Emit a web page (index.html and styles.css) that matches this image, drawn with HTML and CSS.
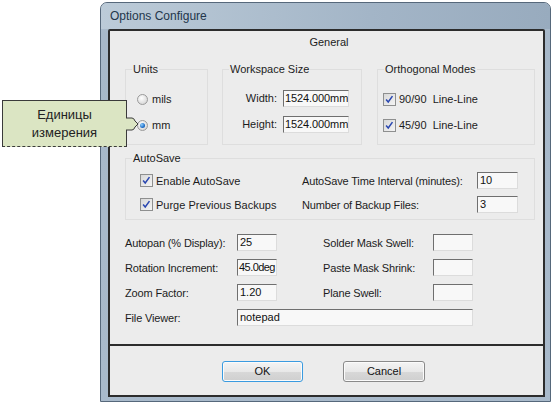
FILE: index.html
```html
<!DOCTYPE html>
<html>
<head>
<meta charset="utf-8">
<link rel="stylesheet" href="styles.css">
</head>
<body>
<div class="window">
  <div class="titlebar">Options Configure</div>
  <div class="client">
    <div class="panel">
      <div class="panel-title">General</div>
      <div class="groups">
        <div class="grp grp-units">
          <span class="legend">Units</span>
          <div class="rows">
            <div class="row"><span class="radio"></span><span>mils</span></div>
            <div class="row"><span class="radio on"><span class="dot"></span></span><span>mm</span></div>
          </div>
        </div>
        <div class="grp grp-ws">
          <span class="legend">Workspace Size</span>
          <div class="ws-grid">
            <span class="rlabel">Width:</span><span class="input">1524.000mm</span>
            <span class="rlabel">Height:</span><span class="input">1524.000mm</span>
          </div>
        </div>
        <div class="grp grp-ortho">
          <span class="legend">Orthogonal Modes</span>
          <div class="rows">
            <div class="row"><span class="cb"><svg viewBox="0 0 13 13" width="11" height="11"><path d="M2.5 6.5 L5 9.5 L10 2.5" fill="none" stroke="#2a47b0" stroke-width="1.8"/></svg></span><span>90/90&nbsp; Line-Line</span></div>
            <div class="row"><span class="cb"><svg viewBox="0 0 13 13" width="11" height="11"><path d="M2.5 6.5 L5 9.5 L10 2.5" fill="none" stroke="#2a47b0" stroke-width="1.8"/></svg></span><span>45/90&nbsp; Line-Line</span></div>
          </div>
        </div>
      </div>
      <div class="grp grp-autosave">
        <span class="legend">AutoSave</span>
        <div class="as-grid">
          <div class="row"><span class="cb"><svg viewBox="0 0 13 13" width="11" height="11"><path d="M2.5 6.5 L5 9.5 L10 2.5" fill="none" stroke="#2a47b0" stroke-width="1.8"/></svg></span><span>Enable AutoSave</span></div>
          <span class="lbl">AutoSave Time Interval (minutes):</span>
          <span class="input">10</span>
          <div class="row"><span class="cb"><svg viewBox="0 0 13 13" width="11" height="11"><path d="M2.5 6.5 L5 9.5 L10 2.5" fill="none" stroke="#2a47b0" stroke-width="1.8"/></svg></span><span>Purge Previous Backups</span></div>
          <span class="lbl">Number of Backup Files:</span>
          <span class="input">3</span>
        </div>
      </div>
      <div class="lower">
        <span class="lbl">Autopan (% Display):</span><span class="input">25</span><span></span>
        <span class="lbl">Solder Mask Swell:</span><span class="input"></span>
        <span class="lbl">Rotation Increment:</span><span class="input tight">45.0deg</span><span></span>
        <span class="lbl">Paste Mask Shrink:</span><span class="input"></span>
        <span class="lbl">Zoom Factor:</span><span class="input">1.20</span><span></span>
        <span class="lbl">Plane Swell:</span><span class="input"></span>
        <span class="lbl">File Viewer:</span><span class="input wide">notepad</span>
      </div>
    </div>
    <div class="buttons">
      <span class="btn ok">OK</span>
      <span class="btn cancel">Cancel</span>
    </div>
  </div>
</div>
<div class="callout">
  <div class="callout-text">Единицы<br>измерения</div>
  <svg class="pointer" viewBox="0 0 14 16" width="14" height="16">
    <path d="M0 1 H6 Q8 1 9 4 L12 7 L9 10 Q8 13 6 13 H0 Z" fill="#dbe5c3"/>
    <path d="M0 1 H6 Q8 1 9 4 L12 7 L9 10 Q8 13 6 13 H0" fill="none" stroke="#3a3a3a" stroke-width="1"/>
  </svg>
</div>
</body>
</html>
```

FILE: styles.css
```css
html, body {
  margin: 0;
  padding: 0;
  background: #ffffff;
}
body {
  width: 554px;
  height: 407px;
  position: relative;
  overflow: hidden;
  font-family: "Liberation Sans", Arial, sans-serif;
  font-size: 11px;
  color: #1c1c1c;
}
.window {
  margin: 2px 0 0 100px;
  width: 451px;
  height: 400px;
  box-sizing: border-box;
  border: 1px solid #56687b;
  border-radius: 7px 7px 0 0;
  background: linear-gradient(to bottom, #b9c8d6 0px, #a7b8c9 30px, #a9bacb 100%);
  display: flex;
  flex-direction: column;
}
.titlebar {
  height: 26px;
  line-height: 26px;
  padding-left: 9px;
  font-size: 12px;
  color: #23364b;
  background: linear-gradient(to right, #bccbd8, #a3b5c7 60%, #98abbe);
  border-radius: 6px 6px 0 0;
}
.client {
  flex: 1;
  margin: 0 5px 4px 7px;
  border: 2px solid #2c2c2c;
  border-radius: 2px 2px 0 0;
  background: #ececec;
  display: flex;
  flex-direction: column;
}
.panel {
  height: 313px;
  border-bottom: 2px solid #2c2c2c;
}
.panel-title {
  height: 22px;
  line-height: 22px;
  text-align: center;
  padding-left: 5px;
}
.groups {
  margin-top: 16px;
  padding-left: 15px;
  display: flex;
}
.grp {
  box-sizing: border-box;
  border: 1px solid #dedede;
  display: flex;
  flex-direction: column;
  align-items: flex-start;
}
.legend {
  margin: -7px 0 0 6px;
  padding: 0 1px;
  line-height: 13px;
  height: 13px;
  background: #ececec;
}
.grp-units { width: 83px; height: 76px; }
.grp-ws { width: 140px; height: 76px; margin-left: 14px; }
.grp-ortho { width: 158px; height: 76px; margin-left: 15px; }
.rows {
  margin-top: 14px;
  display: flex;
  flex-direction: column;
  gap: 8px;
}
.grp-units .rows { padding-left: 11px; }
.grp-ortho .rows { padding-left: 5px; }
.row {
  height: 18px;
  display: flex;
  align-items: center;
  gap: 4px;
  white-space: nowrap;
}
.grp-ortho .row { gap: 3px; }
.radio {
  width: 11px;
  height: 11px;
  box-sizing: border-box;
  border: 1px solid #9a9a9a;
  border-radius: 50%;
  background: radial-gradient(circle at 40% 35%, #ffffff, #dcdcdc 70%, #c9c9c9);
  display: flex;
  align-items: center;
  justify-content: center;
}
.radio .dot {
  width: 5px;
  height: 5px;
  border-radius: 50%;
  background: radial-gradient(circle at 35% 35%, #8fd0ff, #1f6fc8 60%, #154f99);
}
.cb {
  width: 13px;
  height: 13px;
  box-sizing: border-box;
  border: 1px solid #8e8f8f;
  background: linear-gradient(to bottom right, #d8d8d8, #f4f4f4);
  display: flex;
  align-items: center;
  justify-content: center;
  flex: none;
}
.cb svg { display: block; }
.ws-grid {
  margin-top: 13px;
  display: grid;
  grid-template-columns: 54px 66px;
  grid-auto-rows: 18px;
  column-gap: 6px;
  row-gap: 8px;
  align-items: center;
}
.rlabel {
  text-align: right;
}
.input {
  box-sizing: border-box;
  height: 17px;
  line-height: 15px;
  padding: 0 1px 0 2px;
  border-top: 1px solid #6f6f6f;
  border-left: 1px solid #6f6f6f;
  border-right: 1px solid #dcdcdc;
  border-bottom: 1px solid #dcdcdc;
  background: #f8f8f8;
  white-space: nowrap;
  overflow: hidden;
  font-size: 11px;
  color: #111;
}
.ws-grid .input { padding-left: 1px; letter-spacing: -0.1px; }
.input.tight { padding-left: 1px; padding-right: 0; letter-spacing: -0.55px; }
.grp-autosave {
  margin: 13px 0 0 15px;
  width: 410px;
  height: 62px;
}
.as-grid {
  margin-top: 5px;
  padding-left: 14px;
  display: grid;
  grid-template-columns: 162px 175px 41px;
  grid-auto-rows: 21px;
  row-gap: 3px;
  align-items: center;
}
.as-grid .row { gap: 3px; }
.lbl {
  white-space: nowrap;
  letter-spacing: -0.15px;
}
.lower {
  margin: 14px 0 0 15px;
  display: grid;
  grid-template-columns: 112px 40px 46px 110px 40px;
  grid-auto-rows: 17px;
  row-gap: 8px;
  align-items: center;
}
.lower .wide {
  grid-column: 2 / 6;
}
.buttons {
  padding-top: 15px;
  display: flex;
}
.btn {
  box-sizing: border-box;
  height: 21px;
  line-height: 19px;
  text-align: center;
  border-radius: 3px;
  background: linear-gradient(to bottom, #f4f4f4 0%, #e8e8e8 50%, #d8d8d8 51%, #cfcfcf 100%);
  box-shadow: inset 0 0 0 1px #fbfbfb;
  font-size: 11px;
  color: #111;
}
.btn.ok {
  margin-left: 112px;
  width: 81px;
  border: 1px solid #3a9be0;
}
.btn.cancel {
  margin-left: 40px;
  width: 82px;
  border: 1px solid #8a8a8a;
}
.callout {
  position: absolute;
  left: 2px;
  top: 100px;
  width: 125px;
  height: 47px;
  box-sizing: border-box;
  border: 1px solid #3a3a3a;
  border-bottom: 1px dashed #3a3a3a;
  background: #dbe5c3;
  display: flex;
  align-items: center;
  justify-content: center;
}
.callout-text {
  font-family: "Liberation Sans", Arial, sans-serif;
  font-size: 13px;
  line-height: 18px;
  text-align: center;
  color: #222;
}
.pointer {
  position: absolute;
  left: 123px;
  top: 16px;
  display: block;
}
```
